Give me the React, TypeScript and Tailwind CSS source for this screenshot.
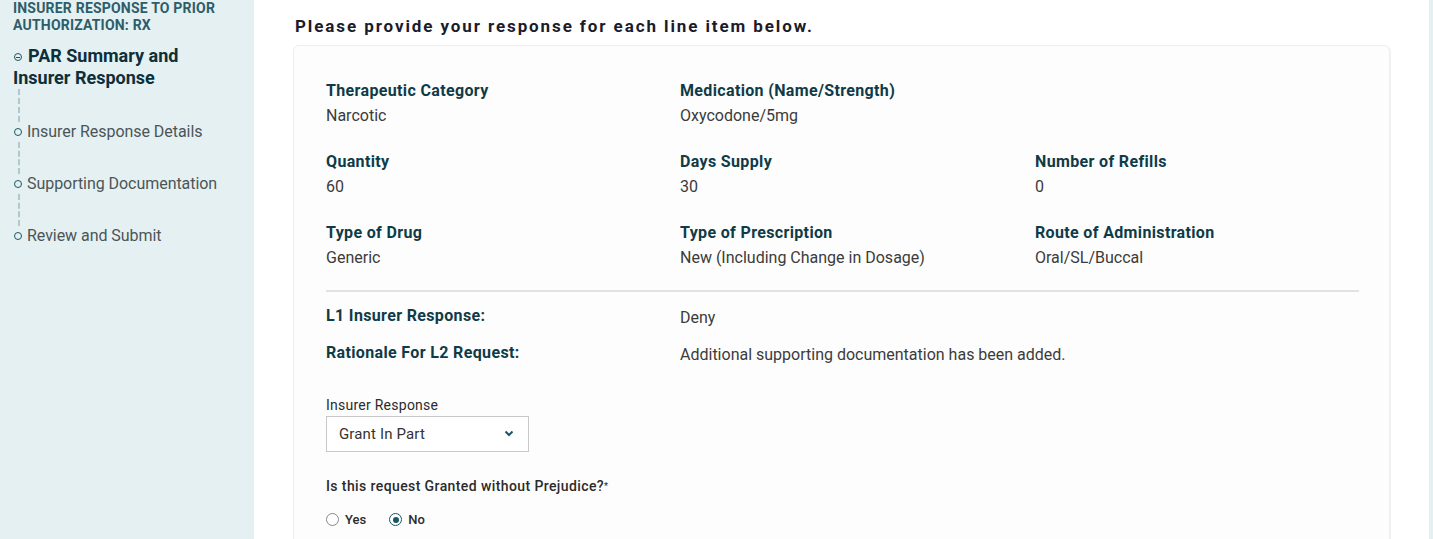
import React from "react";

const Field = ({ label, value }: { label: string; value: string }) => (
  <div className="flex flex-col">
    <div className="text-[16px] font-bold leading-[20px] tracking-[0.35px] text-[#0f3b47]">{label}</div>
    <div className="mt-[5px] text-[16px] leading-[20px] text-[#3b3b3b]">{value}</div>
  </div>
);

const Step = ({ label }: { label: string }) => (
  <div className="flex items-center gap-[5px] pl-[1px]">
    <span className="h-[8px] w-[8px] rounded-full border border-[#1d5563] bg-transparent" />
    <span className="text-[16px] leading-[20px] tracking-[-0.05px] text-[#4b5558]">{label}</span>
  </div>
);

export default function App() {
  return (
    <div
      className="flex h-[539px] w-[1433px] overflow-hidden bg-[#e5f0f2]"
      style={{ fontFamily: "Roboto, 'Open Sans', sans-serif" }}
    >
      {/* Sidebar */}
      <aside className="w-[254px] shrink-0 bg-[#e5f0f2] px-[13px]">
        <div className="mt-0 text-[14px] font-bold uppercase leading-[17px] tracking-[0.2px] text-[#2e5d6a]">
          Insurer response to prior
          <br />
          authorization: rx
        </div>
        <div className="mt-[11px] text-[18px] font-bold leading-[22px] text-[#0c2f3a]">
          <span className="ml-[1px] mr-[6px] inline-flex h-[8px] w-[8px] items-center justify-center rounded-full border border-[#1d5563] align-middle leading-none">
            <span className="block h-[1px] w-[4px] bg-[#1d5563]" />
          </span>
          PAR Summary and
          <br />
          Insurer Response
        </div>
        <div className="flex flex-col">
          <div className="ml-[5px] h-[33px] border-l-2 border-dashed border-[#b3c6cb]" />
          <Step label="Insurer Response Details" />
          <div className="ml-[5px] h-[32px] border-l-2 border-dashed border-[#b3c6cb]" />
          <Step label="Supporting Documentation" />
          <div className="ml-[5px] h-[32px] border-l-2 border-dashed border-[#b3c6cb]" />
          <Step label="Review and Submit" />
        </div>
      </aside>

      {/* Main */}
      <main className="w-[1175px] shrink-0 bg-white pl-[41px] pt-[16px]">
        <h1 className="text-[17px] font-bold leading-[20px] tracking-[1.9px] text-[#1b1b2b]">
          Please provide your response for each line item below.
        </h1>
        <div className="-ml-[2px] mt-[9px] h-[600px] w-[1097px] rounded-[6px] border border-[#eeeeee] bg-[#fdfdfd] px-[32px] pt-[35px] shadow-[1px_1px_2px_rgba(0,0,0,0.06)]">
          <div className="grid grid-cols-[354px_355px_1fr] gap-y-[26px]">
            <Field label="Therapeutic Category" value="Narcotic" />
            <Field label="Medication (Name/Strength)" value="Oxycodone/5mg" />
            <div />
            <Field label="Quantity" value="60" />
            <Field label="Days Supply" value="30" />
            <Field label="Number of Refills" value="0" />
            <Field label="Type of Drug" value="Generic" />
            <Field label="Type of Prescription" value="New (Including Change in Dosage)" />
            <Field label="Route of Administration" value="Oral/SL/Buccal" />
          </div>
          <div className="mt-[22px] h-[2px] w-[1033px] bg-[#e2e2e2]" />
          <div className="mt-[14px] grid grid-cols-[354px_1fr] gap-y-[15px]">
            <div className="text-[16px] font-bold leading-[20px] tracking-[0.35px] text-[#0f3b47]">L1 Insurer Response:</div>
            <div className="pt-[2px] text-[16px] leading-[20px] text-[#3b3b3b]">Deny</div>
            <div className="text-[16px] font-bold leading-[20px] tracking-[0.35px] text-[#0f3b47]">Rationale For L2 Request:</div>
            <div className="pt-[2px] text-[16px] leading-[20px] text-[#3b3b3b]">
              Additional supporting documentation has been added.
            </div>
          </div>
          <div className="mt-[32px] text-[14px] leading-[17px] tracking-[0.25px] text-[#2b2b2b]">Insurer Response</div>
          <div className="mt-[2px] flex h-[36px] w-[203px] items-center justify-between border border-[#c8c8c8] bg-white pl-[12px] pr-[14px]">
            <span className="text-[15px] tracking-[0.15px] text-[#333333]">Grant In Part</span>
            <svg width="10" height="7" viewBox="0 0 10 7" className="mt-[-2px]">
              <path d="M1.5 1.5 L5 5 L8.5 1.5" fill="none" stroke="#1d5563" strokeWidth="2" />
            </svg>
          </div>
          <div className="mt-[26px] text-[14px] font-medium leading-[17px] tracking-[0.4px] text-[#2b2b2b]">
            Is this request Granted without Prejudice?<span className="align-top text-[9px]">*</span>
          </div>
          <div className="mt-[15px] flex items-center text-[13px] font-medium text-[#2b2b2b]">
            <span className="h-[13px] w-[13px] rounded-full border border-[#888888] bg-white" />
            <span className="ml-[6px]">Yes</span>
            <span className="ml-[23px] flex h-[13px] w-[13px] items-center justify-center rounded-full border-[1.5px] border-[#1d5563] bg-white">
              <span className="h-[6px] w-[6px] rounded-full bg-[#1d5563]" />
            </span>
            <span className="ml-[6px]">No</span>
          </div>
        </div>
      </main>
    </div>
  );
}
